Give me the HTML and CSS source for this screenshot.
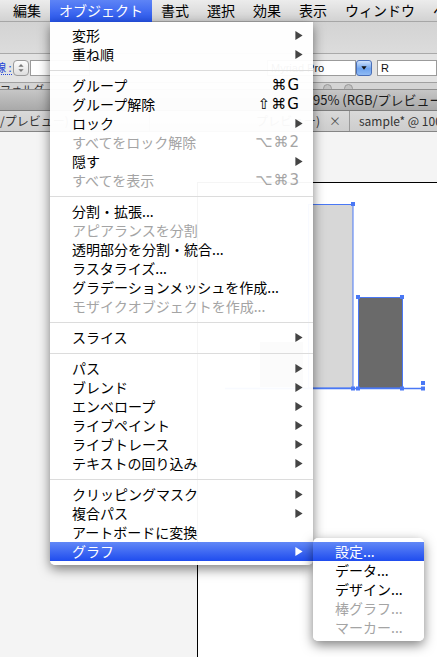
FILE: index.html
```html
<!DOCTYPE html>
<html lang="ja">
<head>
<meta charset="utf-8">
<title>Illustrator オブジェクト メニュー</title>
<link rel="stylesheet" href="styles.css">
</head>
<body>
<div class="screen">
  <div class="menubar">
    <span class="mb-item">編集</span>
    <span class="mb-item active">オブジェクト</span>
    <span class="mb-item">書式</span>
    <span class="mb-item">選択</span>
    <span class="mb-item">効果</span>
    <span class="mb-item">表示</span>
    <span class="mb-item">ウィンドウ</span>
    <span class="mb-item">ヘルプ</span>
  </div>

  <div class="app">
    <div class="toolbar-top"></div>
    <div class="control-row">
      <div class="ctl-left">
        <span class="ctl-label">線 :</span>
        <span class="stepper">
          <svg viewBox="0 0 16 16" width="16" height="16"><path d="M5 6.5L8 3.5L11 6.5Z M5 9.5L8 12.5L11 9.5Z" fill="#777"/></svg>
        </span>
        <span class="field field-left"></span>
      </div>
      <div class="ctl-right">
        <span class="field field-font">Myriad Pro</span>
        <span class="dropbtn"><svg viewBox="0 0 16 16" width="16" height="16"><path d="M5 6L11 6L8 10Z" fill="#111"/></svg></span>
        <span class="field field-style">R</span>
      </div>
    </div>
    <div class="panel-row">
      <span class="panel-text">フォルダ</span>
      <span class="knobs"><span class="knob"></span><span class="knob"></span></span>
    </div>
    <div class="titlebar">95% (RGB/プレビュー)</div>
    <div class="tabrow">
      <div class="tab tab-a">/プレビュー)</div>
      <div class="tab tab-b"><span>プレビュー)</span><span class="close">×</span></div>
      <div class="tab tab-c">sample* @ 100% (RGB/プレビュー)</div>
    </div>
    <div class="canvas">
      <div class="artboard">
        <svg class="chart" width="239" height="480" viewBox="198 183 239 480">
          <rect x="260" y="342" width="43" height="45" fill="#a0a0a0"/>
          <rect x="308.5" y="204.5" width="44.5" height="183.5" fill="#d7d7d7" stroke="#4a78f5" stroke-width="1"/>
          <rect x="358.5" y="297.5" width="44" height="90.5" fill="#6a6a6a" stroke="#4a78f5" stroke-width="1"/>
          <line x1="225" y1="388.5" x2="423" y2="388.5" stroke="#4a78f5" stroke-width="1.5"/>
          <g fill="#4a78f5">
            <rect x="351" y="202" width="4" height="4"/>
            <rect x="351" y="386.5" width="4" height="4"/>
            <rect x="356" y="295" width="4" height="4"/>
            <rect x="400" y="295" width="4" height="4"/>
            <rect x="356" y="386.5" width="4" height="4"/>
            <rect x="400" y="386.5" width="4" height="4"/>
            <rect x="421" y="381" width="4" height="4"/>
            <rect x="421" y="386.5" width="4" height="4"/>
          </g>
        </svg>
      </div>
    </div>
  </div>

  <div class="menu">
    <div class="item"><span class="label">変形</span><svg class="arrow" viewBox="0 0 8 10"><path d="M0 0L8 5L0 10Z"/></svg></div>
    <div class="item"><span class="label">重ね順</span><svg class="arrow" viewBox="0 0 8 10"><path d="M0 0L8 5L0 10Z"/></svg></div>
    <div class="sep"></div>
    <div class="item"><span class="label">グループ</span><span class="sc">⌘G</span></div>
    <div class="item"><span class="label">グループ解除</span><span class="sc">⇧⌘G</span></div>
    <div class="item"><span class="label">ロック</span><svg class="arrow" viewBox="0 0 8 10"><path d="M0 0L8 5L0 10Z"/></svg></div>
    <div class="item disabled"><span class="label">すべてをロック解除</span><span class="sc">⌥⌘2</span></div>
    <div class="item"><span class="label">隠す</span><svg class="arrow" viewBox="0 0 8 10"><path d="M0 0L8 5L0 10Z"/></svg></div>
    <div class="item disabled"><span class="label">すべてを表示</span><span class="sc">⌥⌘3</span></div>
    <div class="sep"></div>
    <div class="item"><span class="label">分割・拡張...</span></div>
    <div class="item disabled"><span class="label">アピアランスを分割</span></div>
    <div class="item"><span class="label">透明部分を分割・統合...</span></div>
    <div class="item"><span class="label">ラスタライズ...</span></div>
    <div class="item"><span class="label">グラデーションメッシュを作成...</span></div>
    <div class="item disabled"><span class="label">モザイクオブジェクトを作成...</span></div>
    <div class="sep"></div>
    <div class="item"><span class="label">スライス</span><svg class="arrow" viewBox="0 0 8 10"><path d="M0 0L8 5L0 10Z"/></svg></div>
    <div class="sep"></div>
    <div class="item"><span class="label">パス</span><svg class="arrow" viewBox="0 0 8 10"><path d="M0 0L8 5L0 10Z"/></svg></div>
    <div class="item"><span class="label">ブレンド</span><svg class="arrow" viewBox="0 0 8 10"><path d="M0 0L8 5L0 10Z"/></svg></div>
    <div class="item"><span class="label">エンベロープ</span><svg class="arrow" viewBox="0 0 8 10"><path d="M0 0L8 5L0 10Z"/></svg></div>
    <div class="item"><span class="label">ライブペイント</span><svg class="arrow" viewBox="0 0 8 10"><path d="M0 0L8 5L0 10Z"/></svg></div>
    <div class="item"><span class="label">ライブトレース</span><svg class="arrow" viewBox="0 0 8 10"><path d="M0 0L8 5L0 10Z"/></svg></div>
    <div class="item"><span class="label">テキストの回り込み</span><svg class="arrow" viewBox="0 0 8 10"><path d="M0 0L8 5L0 10Z"/></svg></div>
    <div class="sep"></div>
    <div class="item"><span class="label">クリッピングマスク</span><svg class="arrow" viewBox="0 0 8 10"><path d="M0 0L8 5L0 10Z"/></svg></div>
    <div class="item"><span class="label">複合パス</span><svg class="arrow" viewBox="0 0 8 10"><path d="M0 0L8 5L0 10Z"/></svg></div>
    <div class="item"><span class="label">アートボードに変換</span></div>
    <div class="item hl"><span class="label">グラフ</span><svg class="arrow" viewBox="0 0 8 10"><path d="M0 0L8 5L0 10Z"/></svg></div>
  </div>

  <div class="submenu">
    <div class="item hl"><span class="label">設定...</span></div>
    <div class="item"><span class="label">データ...</span></div>
    <div class="item"><span class="label">デザイン...</span></div>
    <div class="item disabled"><span class="label">棒グラフ...</span></div>
    <div class="item disabled"><span class="label">マーカー...</span></div>
  </div>
</div>
</body>
</html>
```
FILE: styles.css
```css
* { box-sizing: border-box; }
html, body { margin: 0; padding: 0; }
body {
  width: 437px;
  height: 657px;
  overflow: hidden;
  font-family: "Noto Sans CJK JP", "Noto Sans", sans-serif;
  color: #000;
}
.screen {
  position: relative;
  width: 437px;
  height: 657px;
  overflow: hidden;
  display: flex;
  flex-direction: column;
  background: #f4f4f4;
}

/* menu bar */
.menubar {
  height: 22px;
  flex: 0 0 22px;
  display: flex;
  padding-left: 4px;
  background: linear-gradient(#ececec, #d2d2d2);
  border-bottom: 1px solid #a6a6a6;
  white-space: nowrap;
  font-size: 14px;
}
.mb-item {
  padding: 0 9px;
  height: 21px;
  line-height: 21px;
}
.mb-item.active {
  height: 22px;
  background: linear-gradient(#5e84f6, #2654ec);
  color: #fff;
}

/* application chrome */
.app {
  flex: 1;
  display: flex;
  flex-direction: column;
  min-height: 0;
}
.toolbar-top {
  height: 32px;
  flex: 0 0 32px;
  background: linear-gradient(#d3d3d3, #dcdcdc);
  border-bottom: 1px solid #a9a9a9;
}
.control-row {
  height: 29px;
  flex: 0 0 29px;
  display: flex;
  align-items: center;
  justify-content: space-between;
  background: #e3e3e3;
  border-bottom: 1px solid #a0a0a0;
  font-family: "Liberation Sans", sans-serif;
  font-size: 11px;
}
.ctl-left, .ctl-right {
  display: flex;
  align-items: center;
}
.ctl-label {
  margin-left: -5px;
  margin-right: 1px;
  color: #2446d8;
  font-family: "Noto Sans CJK JP", sans-serif;
  font-size: 11px;
  line-height: 13px;
  border-bottom: 1px dotted #2446d8;
}
.stepper {
  width: 16px;
  height: 16px;
  border: 1px solid #9a9a9a;
  border-radius: 4px;
  background: linear-gradient(#fdfdfd, #dedede);
  display: flex;
  align-items: center;
  justify-content: center;
  overflow: hidden;
}
.stepper svg { display: block; }
.field {
  height: 16px;
  background: #fff;
  border: 1px solid #9b9b9b;
  line-height: 14px;
  padding-left: 3px;
  color: #111;
  white-space: nowrap;
  overflow: hidden;
}
.field-left { width: 60px; margin-left: 1px; }
.field-font { width: 89px; }
.field-style { width: 60px; margin-left: 5px; }
.dropbtn {
  width: 16px;
  height: 16px;
  border: 1px solid #4a6fb8;
  border-radius: 3px;
  background: linear-gradient(#cfe2fb, #6ea3ee 55%, #8fbaf4);
  display: flex;
  align-items: center;
  justify-content: center;
}
.dropbtn svg { display: block; }
.panel-row {
  height: 6px;
  flex: 0 0 6px;
  overflow: hidden;
  display: flex;
  background: #d4d4d4;
  font-size: 11px;
  line-height: 12px;
  color: #333;
}
.knobs {
  display: flex;
  gap: 12px;
  margin-left: auto;
  margin-right: 84px;
  padding-top: 1px;
}
.knob {
  width: 9px;
  height: 9px;
  border-radius: 50%;
  background: #c2c2c2;
  border: 1px solid #9a9a9a;
}
.titlebar {
  height: 22px;
  flex: 0 0 22px;
  padding-left: 313px;
  background: linear-gradient(#c6c6c6, #a9a9a9);
  border-top: 1px solid #8f8f8f;
  border-bottom: 1px solid #7d7d7d;
  font-size: 13px;
  line-height: 20px;
  color: #1a1a1a;
  white-space: nowrap;
  overflow: hidden;
}
.tabrow {
  height: 21px;
  flex: 0 0 21px;
  display: flex;
  background: linear-gradient(#d9d9d9, #cdcdcd);
  border-bottom: 1px solid #858585;
  font-size: 12px;
  line-height: 20px;
  color: #333;
  white-space: nowrap;
  overflow: hidden;
}
.tab { overflow: hidden; }
.tab-a { width: 150px; flex: 0 0 150px; border-right: 1px solid #999; }
.tab-b {
  width: 200px;
  flex: 0 0 200px;
  display: flex;
  justify-content: flex-end;
  gap: 9px;
  padding-right: 8px;
  border-right: 1px solid #9a9a9a;
}
.close { color: #555; }
.tab-c { padding-left: 9px; }

.canvas {
  flex: 1;
  padding: 50px 0 0 197px;
  background: #f4f4f4;
  display: flex;
  min-height: 0;
}
.artboard {
  flex: 1;
  background: #fff;
  border-top: 1px solid #000;
  border-left: 1px solid #000;
  overflow: hidden;
}
.chart { display: block; }

/* dropdown menus */
.menu, .submenu {
  position: absolute;
  background: rgba(255, 255, 255, 0.96);
  box-shadow: 0 4px 12px rgba(0, 0, 0, 0.5);
  padding: 4px 0;
  font-size: 14px;
}
.menu {
  left: 50px;
  top: 22px;
  width: 263px;
  border-radius: 0 0 5px 5px;
}
.submenu {
  left: 313px;
  top: 538px;
  width: 111px;
  border-radius: 5px;
}
.item {
  height: 19px;
  display: flex;
  align-items: center;
  padding: 0 10px 0 22px;
  white-space: nowrap;
}
.label { flex: 1; line-height: 19px; }
.item.disabled { color: #a4a4a4; }
.item.hl {
  background: linear-gradient(#6188f7, #1f4cee);
  color: #fff;
}
.sc {
  margin-right: 3px;
  font-family: "DejaVu Sans", sans-serif;
  font-size: 15px;
  letter-spacing: 1px;
  line-height: 19px;
}
.arrow {
  width: 8px;
  height: 9px;
  fill: #444;
  display: block;
}
.item.hl .arrow { fill: #fff; }
.sep {
  height: 1px;
  background: #dcdcdc;
  margin: 6px 0 5px;
}
```
